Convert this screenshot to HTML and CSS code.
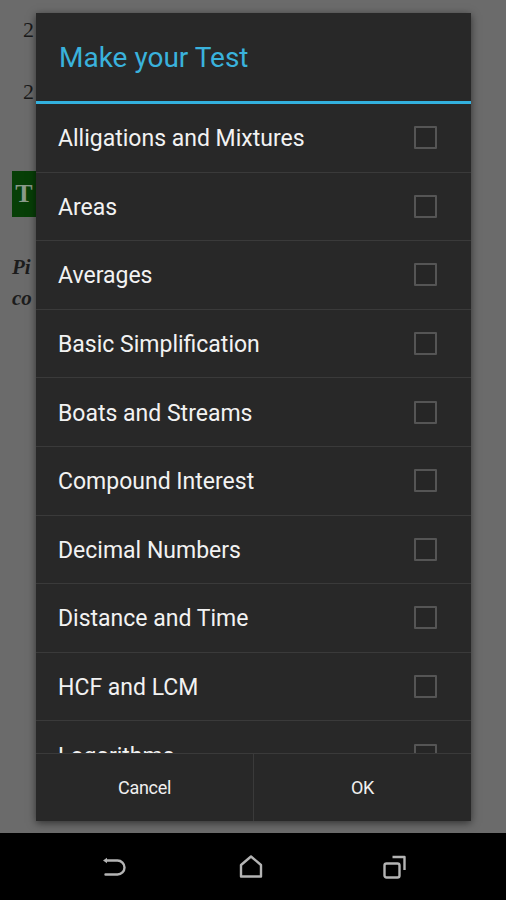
FILE: index.html
```html
<!DOCTYPE html>
<html>
<head>
<meta charset="utf-8">
<link rel="stylesheet" href="styles.css">
</head>
<body>
<div class="screen">
  <div class="page">
    <div class="num n1">2</div>
    <div class="num n2">2</div>
    <div class="green">T</div>
    <div class="ital i1">Pi</div>
    <div class="ital i2">co</div>
  </div>
  <div class="dialog">
    <div class="title">Make your Test</div>
    <div class="list">
      <div class="row"><span class="label">Alligations and Mixtures</span><span class="box"></span></div>
      <div class="row"><span class="label">Areas</span><span class="box"></span></div>
      <div class="row"><span class="label">Averages</span><span class="box"></span></div>
      <div class="row"><span class="label">Basic Simplification</span><span class="box"></span></div>
      <div class="row"><span class="label">Boats and Streams</span><span class="box"></span></div>
      <div class="row"><span class="label">Compound Interest</span><span class="box"></span></div>
      <div class="row"><span class="label">Decimal Numbers</span><span class="box"></span></div>
      <div class="row"><span class="label">Distance and Time</span><span class="box"></span></div>
      <div class="row"><span class="label">HCF and LCM</span><span class="box"></span></div>
      <div class="row"><span class="label">Logarithms</span><span class="box"></span></div>
    </div>
    <div class="buttons">
      <div class="btn">Cancel</div>
      <div class="btn btn-ok">OK</div>
    </div>
  </div>
</div>
<div class="navbar">
  <svg class="nav nav-back" width="24" height="22" viewBox="0 0 24 22">
    <path d="M4 3.5 H15.5 A7 7 0 0 1 15.5 17.5 H3.5" fill="none" stroke="#b4b4b4" stroke-width="2.4" stroke-linecap="round"/>
    <path d="M1 3.5 L5 0.8 L5 6.2 Z" fill="#b4b4b4"/>
  </svg>
  <svg class="nav nav-home" width="24" height="24" viewBox="0 0 24 24">
    <path d="M12 1.5 L22 10 V21.5 H2 V10 Z" fill="none" stroke="#b4b4b4" stroke-width="2.4" stroke-linejoin="round"/>
  </svg>
  <svg class="nav nav-rec" width="24" height="24" viewBox="0 0 24 24">
    <rect x="1.5" y="8.5" width="15" height="14" rx="2" fill="none" stroke="#b4b4b4" stroke-width="2.4"/>
    <path d="M9.5 2 H21.5 V15" fill="none" stroke="#b4b4b4" stroke-width="2.4" stroke-linejoin="round"/>
  </svg>
</div>
</body>
</html>
```
FILE: styles.css
```css
html, body {
  margin: 0;
  padding: 0;
}
body {
  width: 506px;
  height: 900px;
  overflow: hidden;
  display: flex;
  flex-direction: column;
  background: #000;
  font-family: Roboto, "Noto Sans", sans-serif;
}
.screen {
  position: relative;
  height: 833px;
  background: #6b6b6b;
  overflow: hidden;
}
.page {
  padding: 18px 0 0 12px;
  font-family: "Liberation Serif", "DejaVu Serif", serif;
  color: #1a1a1a;
}
.num {
  font-size: 22px;
  line-height: 24px;
  padding-left: 11px;
}
.n2 {
  margin-top: 38px;
}
.green {
  margin-top: 67px;
  width: 24px;
  height: 46px;
  background: #073f07;
  color: #8a9a8a;
  font-size: 26px;
  font-weight: bold;
  line-height: 46px;
  text-align: center;
}
.ital {
  font-style: italic;
  font-weight: bold;
  font-size: 21px;
  line-height: 31px;
  color: #1c1c1c;
}
.i1 {
  margin-top: 35px;
}
.dialog {
  position: absolute;
  left: 36px;
  top: 13px;
  width: 435px;
  height: 808px;
  background: #282828;
  box-shadow: 0 2px 8px rgba(0, 0, 0, 0.55);
  display: flex;
  flex-direction: column;
}
.title {
  height: 91px;
  flex-shrink: 0;
  box-sizing: border-box;
  padding: 28px 0 0 23px;
  font-size: 28px;
  line-height: 34px;
  color: #3ab2dc;
  border-bottom: 3px solid #33b1de;
}
.list {
  flex: 1;
  overflow: hidden;
}
.row {
  height: 67.6px;
  border-bottom: 1px solid #3a3a3a;
  display: flex;
  align-items: center;
  justify-content: space-between;
  padding: 0 34px 0 22px;
}
.label {
  font-size: 23px;
  color: #f2f2f2;
  padding-top: 2px;
}
.box {
  width: 19px;
  height: 19px;
  border: 2px solid #555;
  border-radius: 1px;
  background: #262626;
}
.buttons {
  height: 67px;
  flex-shrink: 0;
  border-top: 1px solid #3a3a3a;
  display: flex;
}
.btn {
  flex: 1;
  display: flex;
  align-items: center;
  justify-content: center;
  font-size: 18px;
  color: #f0f0f0;
  letter-spacing: -0.3px;
}
.btn-ok {
  border-left: 1px solid #3a3a3a;
}
.navbar {
  height: 67px;
  background: #000;
  display: flex;
  align-items: center;
  padding-left: 102px;
}
.nav {
  display: block;
}
.nav-back {
  margin-top: 2px;
}
.nav-home {
  margin-left: 113px;
}
.nav-rec {
  margin-left: 120px;
}
```
